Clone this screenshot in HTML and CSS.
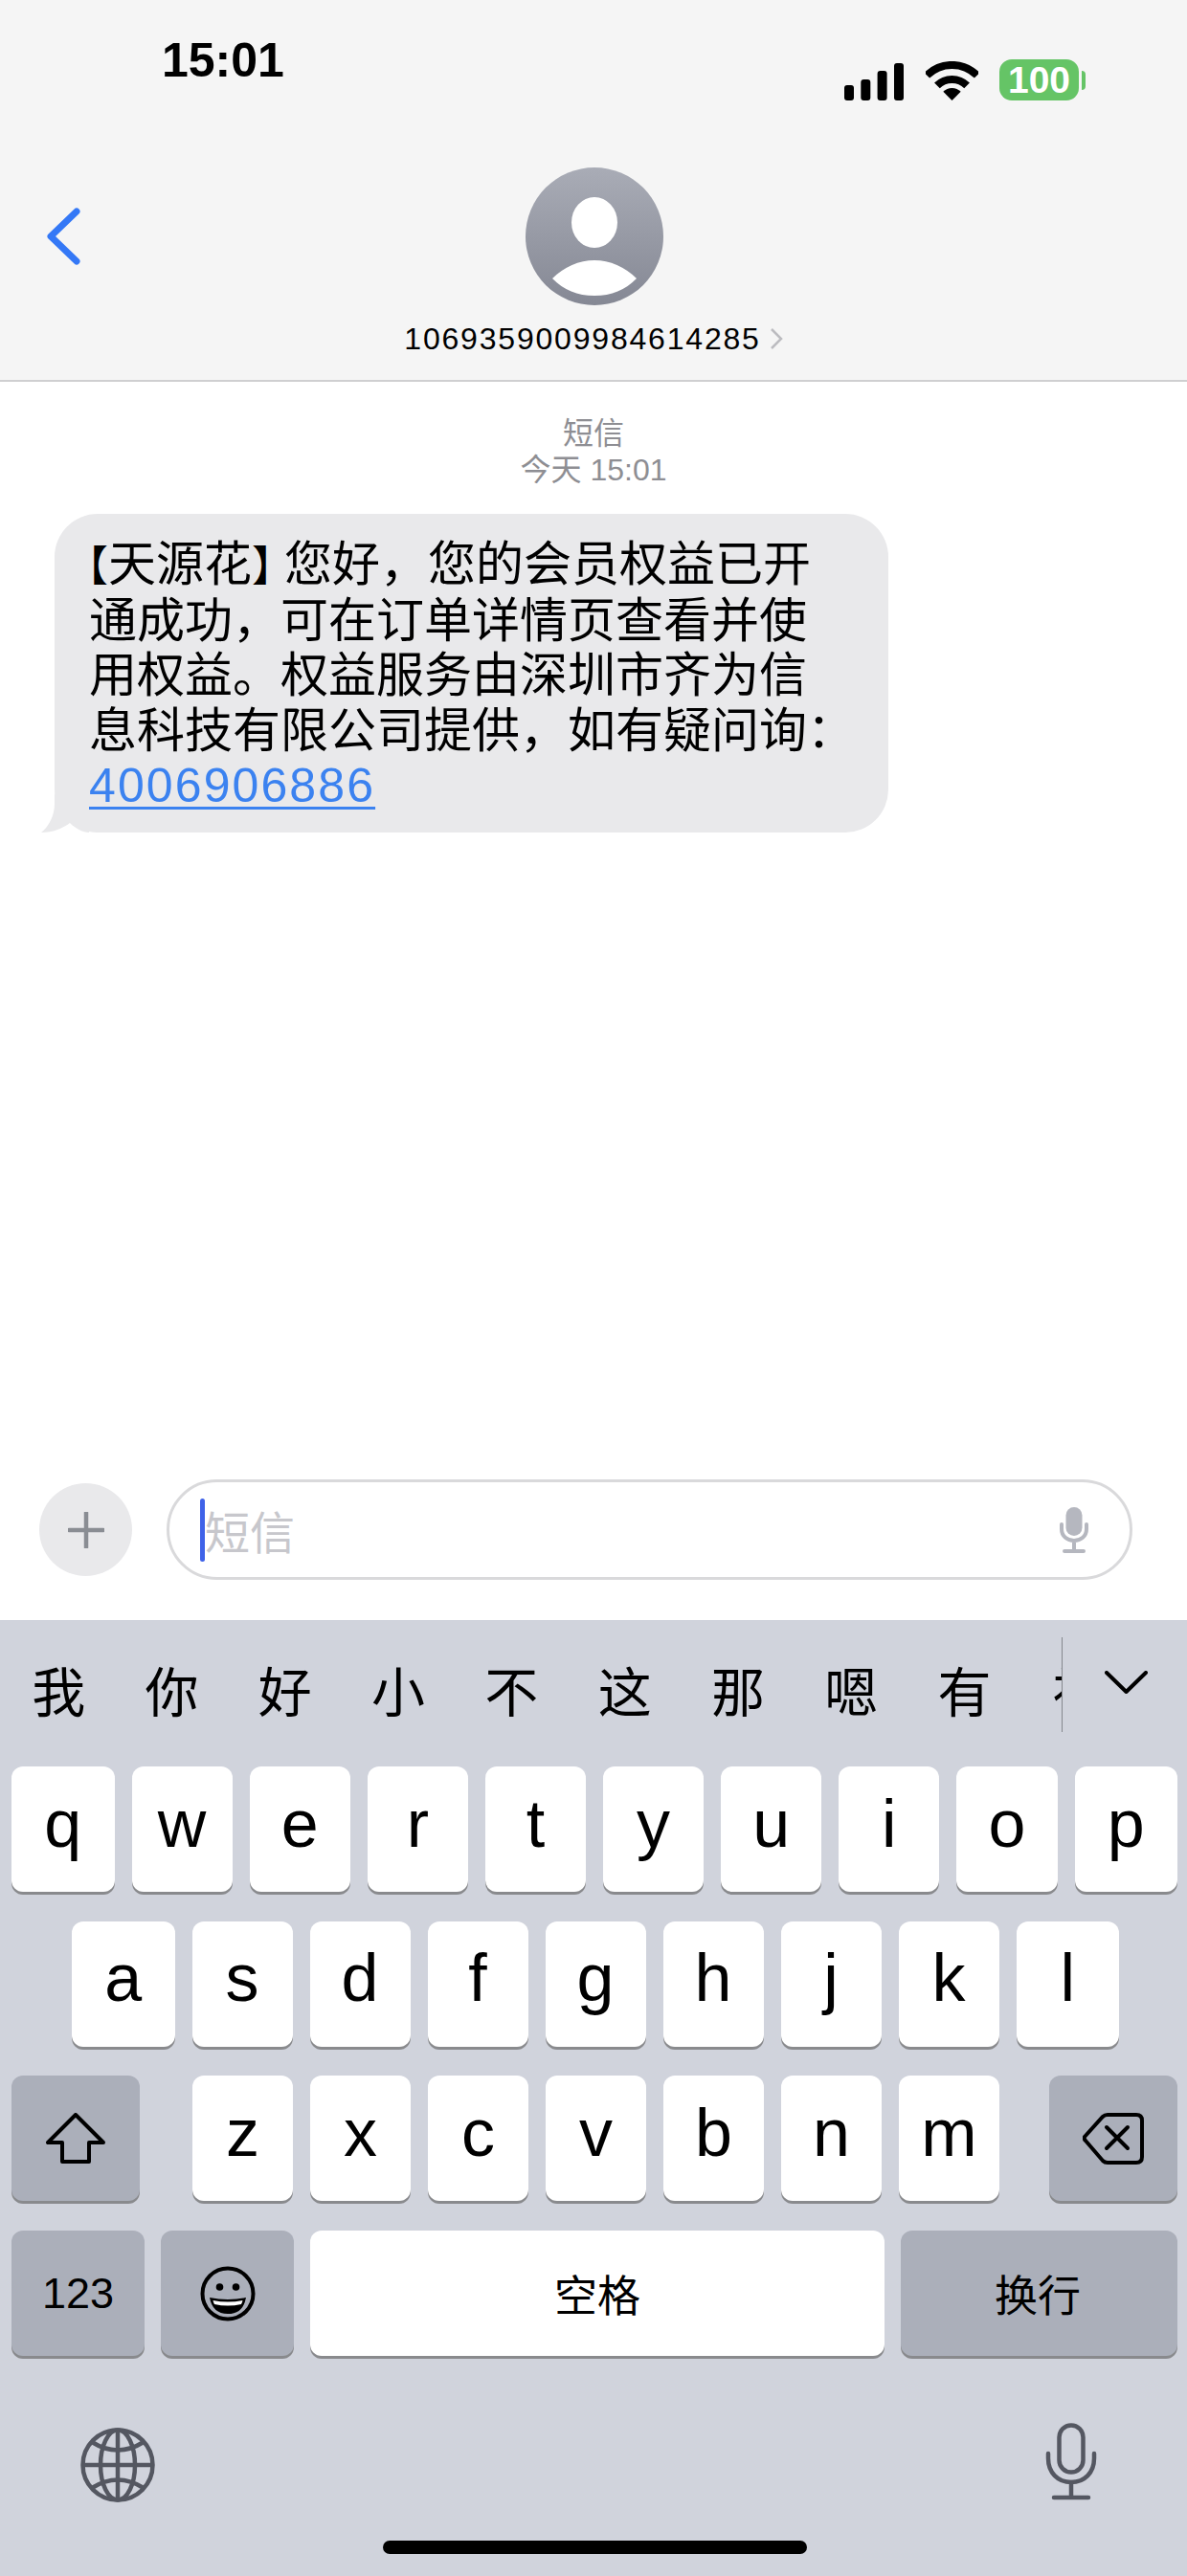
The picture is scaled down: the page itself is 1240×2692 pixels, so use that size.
FILE: index.html
```html
<!DOCTYPE html>
<html lang="zh-CN">
<head>
    <meta charset="UTF-8">
    <meta name="viewport" content="width=device-width, initial-scale=1.0">
    <title>短信</title>
    <link rel="stylesheet" href="styles.css">
</head>
<body>
    <!-- Header -->
    <header class="top">
        <div class="status">
            <span class="time">15:01</span>
            <div class="status-icons">
                <svg class="signal" width="62" height="40" viewBox="0 0 62 40">
                    <rect x="0" y="24" width="10" height="16" rx="3"/>
                    <rect x="17.3" y="18" width="10" height="22" rx="3"/>
                    <rect x="34.6" y="9" width="10" height="31" rx="3"/>
                    <rect x="52" y="1" width="10" height="39" rx="3"/>
                </svg>
                <svg class="wifi" width="55" height="41" viewBox="0 0 55 41">
                    <path d="M1.3 14.8A37 37 0 0 1 53.7 14.8" fill="none" stroke="#000" stroke-width="8"/>
                    <path d="M11.9 25.4A22 22 0 0 1 43.1 25.4" fill="none" stroke="#000" stroke-width="8"/>
                    <path d="M27.5 41L18.3 31.8A13 13 0 0 1 36.7 31.8Z"/>
                </svg>
                <div class="battery">
                    <span class="battery-body">100</span>
                    <span class="battery-tip"></span>
                </div>
            </div>
        </div>

        <div class="contact">
            <svg class="back" width="35" height="60" viewBox="0 0 35 60">
                <path d="M31 4L4 30L31 56" fill="none" stroke="#3478f6" stroke-width="7" stroke-linecap="round" stroke-linejoin="round"/>
            </svg>
            <svg class="avatar" width="144" height="144" viewBox="0 0 144 144">
                <defs>
                    <linearGradient id="avatarFill" x1="0" y1="0" x2="0" y2="1">
                        <stop offset="0" stop-color="#a9acb6"/>
                        <stop offset="1" stop-color="#858894"/>
                    </linearGradient>
                </defs>
                <circle cx="72" cy="72" r="72" fill="url(#avatarFill)"/>
                <ellipse cx="72" cy="57.5" rx="24" ry="26.5" fill="#fff"/>
                <path d="M28 116C40 104 56 97 72 97C88 97 104 104 116 116C104 128 90 134 72 134C54 134 40 128 28 116Z" fill="#fff"/>
            </svg>
        </div>

        <div class="number">
            <span>1069359009984614285</span>
            <svg width="14" height="22" viewBox="0 0 14 22">
                <path d="M2 1L12 11L2 21" fill="none" stroke="#bcbcc0" stroke-width="2.5"/>
            </svg>
        </div>
    </header>

    <!-- Messages -->
    <main class="thread">
        <div class="meta">
            <div>短信</div>
            <div>今天 15:01</div>
        </div>

        <div class="bubble">
            <svg class="tail" width="50" height="40" viewBox="0 0 50 40">
                <path d="M14 0L14 10C14 22 8 34 0 40C12 40 22 36 30 30C36 36 44 40 50 40L50 0Z" fill="#e9e9eb"/>
            </svg>
            <p><span class="bracket bracket-open">【</span>天源花<span class="bracket bracket-close">】</span>您好，您的会员权益已开<br>通成功，可在订单详情页查看并使<br>用权益。权益服务由深圳市齐为信<br>息科技有限公司提供，如有疑问询：<br><a href="#" class="phone">4006906886</a></p>
        </div>
    </main>

    <!-- Compose bar -->
    <div class="compose">
        <div class="plus">
            <svg width="38" height="38" viewBox="0 0 38 38">
                <path d="M19 1V37M1 19H37" stroke="#8a8d93" stroke-width="4.5" stroke-linecap="round"/>
            </svg>
        </div>
        <div class="input">
            <span class="caret"></span>
            <span class="placeholder">短信</span>
            <svg class="input-mic" width="30" height="48" viewBox="0 0 30 48">
                <rect x="6.5" y="0" width="17" height="30" rx="8.5" fill="#b5b7bf"/>
                <path d="M2 18V23C2 30.500 8 35 15 35C22 35 28 30.500 28 23V18M15 35V45M5 46H25" fill="none" stroke="#b5b7bf" stroke-width="4" stroke-linecap="round"/>
            </svg>
        </div>
    </div>

    <!-- Keyboard -->
    <section class="keyboard">
        <div class="candidates">
            <div class="candidate-list">
                <span>我</span><span>你</span><span>好</span><span>小</span><span>不</span><span>这</span><span>那</span><span>嗯</span><span>有</span>
            </div>
            <span class="candidate-cut">社</span>
            <span class="candidate-sep"></span>
            <svg class="candidate-more" width="45" height="24" viewBox="0 0 45 24">
                <path d="M2 2L22.500 22L43 2" fill="none" stroke="#000" stroke-width="4" stroke-linecap="round" stroke-linejoin="round"/>
            </svg>
        </div>

        <div class="key-rows">
            <div class="row">
                <div class="key key-edge">q</div><div class="key">w</div><div class="key">e</div><div class="key">r</div><div class="key">t</div><div class="key">y</div><div class="key">u</div><div class="key">i</div><div class="key">o</div><div class="key key-edge">p</div>
            </div>
            <div class="row row-home">
                <div class="key key-edge">a</div><div class="key">s</div><div class="key">d</div><div class="key">f</div><div class="key">g</div><div class="key">h</div><div class="key">j</div><div class="key">k</div><div class="key key-edge">l</div>
            </div>
            <div class="row">
                <div class="key key-fn key-shift">
                    <svg width="62" height="54" viewBox="0 0 62 54">
                        <path d="M31 2L2 31H17V51H45V31H60Z" fill="none" stroke="#000" stroke-width="4" stroke-linejoin="round"/>
                    </svg>
                </div>
                <div class="letters">
                    <div class="key">z</div><div class="key">x</div><div class="key">c</div><div class="key">v</div><div class="key">b</div><div class="key">n</div><div class="key">m</div>
                </div>
                <div class="key key-fn key-delete">
                    <svg width="64" height="54" viewBox="0 0 64 54">
                        <path d="M2 25L21 4Q23 2 26 2H56Q62 2 62 8V46Q62 52 56 52H26Q23 52 21 50L3 29Q1 27 2 25Z" fill="none" stroke="#000" stroke-width="4"/>
                        <path d="M25 15L47 37M47 15L25 37" stroke="#000" stroke-width="4" stroke-linecap="round"/>
                    </svg>
                </div>
            </div>
            <div class="row">
                <div class="key key-fn key-small key-123">123</div>
                <div class="key key-fn key-emoji">
                    <svg width="58" height="58" viewBox="0 0 58 58">
                        <circle cx="29" cy="29" r="26.500" fill="none" stroke="#000" stroke-width="4"/>
                        <circle cx="20.500" cy="22" r="3.800"/>
                        <circle cx="37.500" cy="22" r="3.800"/>
                        <path d="M10 33Q29 37 48 33Q45 50 29 50Q13 50 10 33Z"/>
                        <path d="M13.500 36Q29 39 44.500 36Q44 38.500 43 40Q29 43 15 40Q14 38.500 13.500 36Z" fill="#fff"/>
                    </svg>
                </div>
                <div class="key key-small key-space">空格</div>
                <div class="key key-fn key-small key-return">换行</div>
            </div>
        </div>

        <div class="kb-bottom">
            <svg class="globe" width="78" height="78" viewBox="0 0 78 78">
                <g fill="none" stroke="#545761" stroke-width="4.500">
                    <circle cx="39" cy="39" r="36.500"/>
                    <ellipse cx="39" cy="39" rx="18" ry="36.500"/>
                    <path d="M39 2.500V75.500M2.500 39H75.500"/>
                    <path d="M12 15Q39 32 66 15M12 63Q39 46 66 63"/>
                </g>
            </svg>
            <svg class="dictation" width="54" height="81" viewBox="0 0 54 81">
                <g fill="none" stroke="#545761" stroke-width="4.500" stroke-linecap="round">
                    <rect x="14.500" y="2.500" width="25" height="49" rx="12.500"/>
                    <path d="M3 32V37C3 52 13 62 27 62C41 62 51 52 51 37V32"/>
                    <path d="M27 62V78M9 78H45"/>
                </g>
            </svg>
        </div>

        <div class="home-bar"></div>
    </section>
</body>
</html>
```

FILE: styles.css
```css
/* General Reset */
* {
    margin: 0;
    padding: 0;
    box-sizing: border-box;
}

/* Body Style */
body {
    width: 1240px;
    height: 2692px;
    overflow: hidden;
    display: flex;
    flex-direction: column;
    font-family: "Liberation Sans", "Noto Sans CJK SC", sans-serif;
    background-color: #fff;
    color: #000;
}

svg {
    display: block;
    flex-shrink: 0;
}

/* Header Style */
.top {
    height: 399px;
    background: #f5f5f5;
    border-bottom: 2px solid #cfcfd1;
}

.status {
    height: 175px;
    padding: 44px 106px 0 169px;
    display: flex;
    justify-content: space-between;
    align-items: flex-start;
}

.time {
    font-size: 50px;
    font-weight: bold;
    line-height: 38px;
}

.status-icons {
    display: flex;
    align-items: flex-end;
    margin-top: 18px;
}

.wifi {
    margin-left: 23px;
}

.battery {
    display: flex;
    align-items: center;
    margin-left: 22px;
}

.battery-body {
    width: 83px;
    height: 43px;
    border-radius: 13px;
    background: #65c466;
    color: #fff;
    font-size: 39px;
    font-weight: bold;
    line-height: 43px;
    text-align: center;
}

.battery-tip {
    width: 4px;
    height: 20px;
    margin-left: 3px;
    border-radius: 0 10px 10px 0;
    background: #65c466;
}

.contact {
    display: grid;
    grid-template-columns: 1fr 144px 1fr;
    align-items: center;
    padding-left: 2px;
}

.back {
    margin-left: 47px;
}

.number {
    margin-top: 20px;
    display: flex;
    justify-content: center;
    align-items: center;
    gap: 9px;
    font-size: 32px;
    letter-spacing: 1.800px;
    line-height: 30px;
}

/* Messages */
.thread {
    flex: 1;
    padding-top: 36px;
}

.meta {
    text-align: center;
    font-size: 32px;
    line-height: 37.5px;
    color: #8e8e93;
}

.bubble {
    position: relative;
    width: 871px;
    height: 333px;
    margin: 27px 0 0 57px;
    padding: 25px 0 0 36px;
    border-radius: 45px;
    background: #e9e9eb;
    font-size: 50px;
    line-height: 57.500px;
}

.bubble p {
    position: relative;
    white-space: nowrap;
}

.tail {
    position: absolute;
    left: -14px;
    bottom: 0;
}

/* Brackets sit half width, as the phone sets them */
.bracket {
    font-size: 44px;
    font-feature-settings: "halt";
}

.bracket-open {
    margin-left: -2px;
}

.bracket-close {
    margin-right: 12px;
}

.phone {
    color: #3b82f0;
    letter-spacing: 2.100px;
    text-decoration: underline;
    text-decoration-thickness: 3px;
    text-underline-offset: 5px;
}

/* Compose bar */
.compose {
    padding: 0 57px 42px 41px;
    display: flex;
    align-items: center;
    gap: 36px;
}

.plus {
    width: 97px;
    height: 97px;
    border-radius: 50%;
    background: #e9e9eb;
    display: flex;
    align-items: center;
    justify-content: center;
}

.input {
    flex: 1;
    height: 105px;
    padding: 0 43px 0 32px;
    border: 3px solid #d9d9db;
    border-radius: 53px;
    display: flex;
    align-items: center;
}

.caret {
    width: 5px;
    height: 66px;
    border-radius: 3px;
    background: #3f62e8;
}

.placeholder {
    font-size: 47px;
    color: #c7c7cc;
}

.input-mic {
    margin-left: auto;
}

/* Keyboard */
.keyboard {
    height: 999px;
    background: #d0d3dc;
}

.candidates {
    height: 153px;
    display: flex;
    align-items: center;
}

.candidate-list {
    padding-left: 2px;
    display: flex;
}

.candidate-list span {
    flex: 0 0 118.300px;
    text-align: center;
    font-size: 56px;
    line-height: 70px;
}

/* Last candidate runs under the separator */
.candidate-cut {
    width: 9px;
    overflow: hidden;
    margin-left: 33px;
    font-size: 56px;
    line-height: 70px;
    white-space: nowrap;
}

.candidate-sep {
    width: 1px;
    height: 99px;
    margin-bottom: 18px;
    background: #85878d;
}

.candidate-more {
    margin: -24px 0 0 44px;
}

.key-rows {
    padding: 0 10px 0 12px;
    display: flex;
    flex-direction: column;
    gap: 30.700px;
}

.row {
    display: flex;
    gap: 18px;
}

.row-home {
    padding: 0 61px 0 63px;
}

.key {
    flex: 1;
    height: 131px;
    padding-bottom: 12px;
    border-radius: 12px;
    background: #fff;
    box-shadow: 0 3px 0 #898a8d;
    display: flex;
    align-items: center;
    justify-content: center;
    font-size: 70px;
}

.key-edge {
    flex: 0 0 107.500px;
}

.key-fn {
    background: #abafba;
}

.key-small {
    padding-bottom: 0;
    font-size: 45px;
}

.key-shift,
.key-delete {
    flex: 0 0 134px;
    padding-bottom: 0;
}

.letters {
    width: 843px;
    margin-left: 37px;
    display: flex;
    gap: 18px;
}

.key-delete {
    margin-left: auto;
}

.key-123 {
    flex: 0 0 139px;
}

.key-emoji {
    flex: 0 0 139px;
    padding-bottom: 0;
    margin-left: -1px;
}

.key-space {
    flex: 0 0 600px;
    margin-left: -1px;
}

.key-return {
    flex: 0 0 289px;
    padding-right: 3px;
    margin-left: -1px;
}

.kb-bottom {
    padding: 70px 94px 0 84px;
    display: flex;
    justify-content: space-between;
    align-items: flex-start;
}

.globe {
    margin-top: 5px;
}

.home-bar {
    width: 443px;
    height: 14px;
    margin: 40px 0 0 400px;
    border-radius: 7px;
    background: #000;
}
```
